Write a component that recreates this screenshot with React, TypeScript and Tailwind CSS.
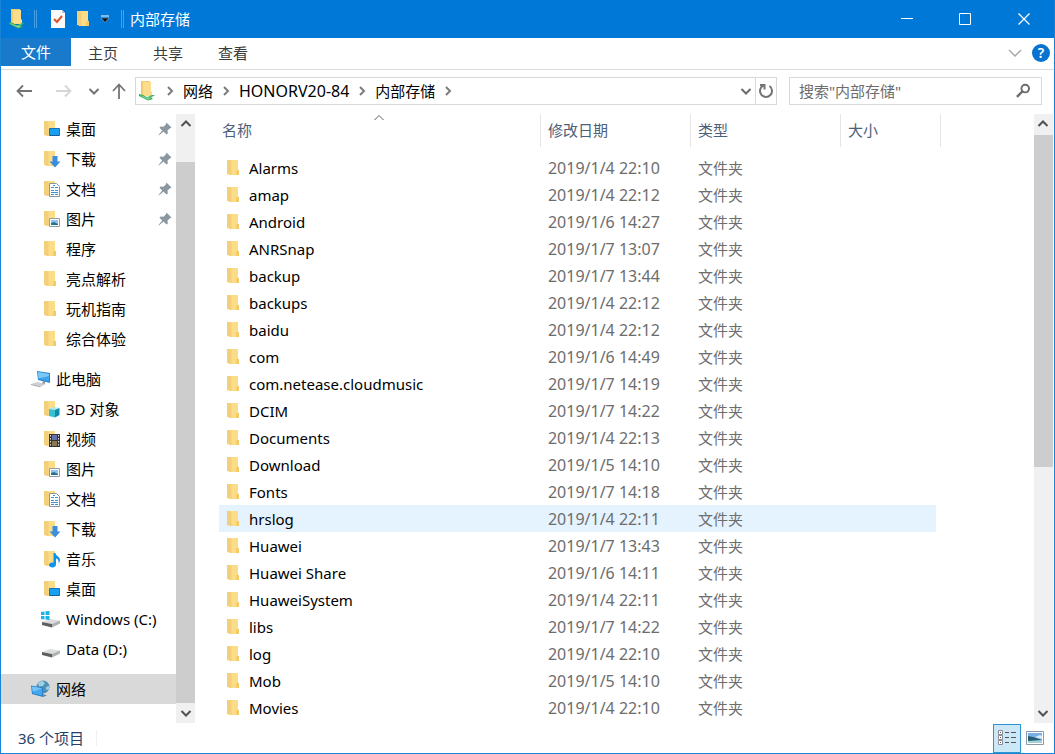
import type { ReactNode } from "react";

const FILES: [string, string][] = [
  ["Alarms", "2019/1/4 22:10"],
  ["amap", "2019/1/4 22:12"],
  ["Android", "2019/1/6 14:27"],
  ["ANRSnap", "2019/1/7 13:07"],
  ["backup", "2019/1/7 13:44"],
  ["backups", "2019/1/4 22:12"],
  ["baidu", "2019/1/4 22:12"],
  ["com", "2019/1/6 14:49"],
  ["com.netease.cloudmusic", "2019/1/7 14:19"],
  ["DCIM", "2019/1/7 14:22"],
  ["Documents", "2019/1/4 22:13"],
  ["Download", "2019/1/5 14:10"],
  ["Fonts", "2019/1/7 14:18"],
  ["hrslog", "2019/1/4 22:11"],
  ["Huawei", "2019/1/7 13:43"],
  ["Huawei Share", "2019/1/6 14:11"],
  ["HuaweiSystem", "2019/1/4 22:11"],
  ["libs", "2019/1/7 14:22"],
  ["log", "2019/1/4 22:10"],
  ["Mob", "2019/1/5 14:10"],
  ["Movies", "2019/1/4 22:10"],
];

function FolderIcon({ children }: { children?: ReactNode }) {
  return (
    <svg width="18" height="18" viewBox="0 0 18 18" className="shrink-0" aria-hidden="true">
      <path d="M3 1h9v9.500l1 1V16H3z" fill="#fbdd88" />
      <path d="M1 1h3l1.500 1.500V16L1 15z" fill="#f3cf7c" />
      <path d="M10.500 11h2.500v5h-3z" fill="#f3cb66" />
      {children}
    </svg>
  );
}

const DesktopIcon = () => (
  <FolderIcon>
    <path d="M6.500 8.500h10v7h-10z" fill="#18a0f2" stroke="#1673b9" />
    <path d="M7 15.500h10" stroke="#0b4f8c" strokeDasharray="1 1" />
  </FolderIcon>
);
const DownloadIcon = () => (
  <FolderIcon>
    <path d="M9.500 6h5v5.500h3L12 17.500 6.500 11.500h3z" fill="#3b8ede" />
  </FolderIcon>
);
const DocIcon = () => (
  <FolderIcon>
    <path d="M6.500 3.500h7l3 3v10h-10z" fill="#fff" stroke="#8795a1" />
    <path d="M8 7.500h3M12 7.500h3M8 10.500h3M12 10.500h3M8 12.500h7M8 14.500h3M12 14.500h3M10 5.500h2" stroke="#3c8fd0" />
  </FolderIcon>
);
const PictureIcon = () => (
  <FolderIcon>
    <path d="M6.500 8.500h10v8h-10z" fill="#fff" stroke="#8e9aa5" />
    <path d="M8 10h7v5H8z" fill="#8cc4ee" />
    <path d="M8 13l3-1 4 2v1H8z" fill="#2d6f8f" />
  </FolderIcon>
);
const CubeIcon = () => (
  <FolderIcon>
    <path d="M6 9l5-2 5.500 1-4.500 2z" fill="#a6ebf3" />
    <path d="M6 9l6 1v7.500L6 16z" fill="#35c0d4" />
    <path d="M12 10l4.500-2v7L12 17.500z" fill="#108ba8" />
  </FolderIcon>
);
const VideoIcon = () => (
  <FolderIcon>
    <path d="M6 4h11v13H6z" fill="#373535" />
    <path d="M9 5h5v5H9z" fill="#6670aa" />
    <path d="M9 11h5v5H9z" fill="#8a7650" />
    <path d="M7.500 5v12M15.500 5v12" stroke="#ddd" strokeDasharray="1.500 1.500" />
  </FolderIcon>
);
const MusicIcon = () => (
  <FolderIcon>
    <path d="M10.500 3h2c0 3 4.500 3.500 4.500 7 0 1.500-.7 2.500-1.500 3 .5-2.500-.7-4-2.500-4.500V14c0 2-1.500 3.500-3.500 3.500S6 16.500 6 15s2-2.900 4.500-2.400z" fill="#1194e8" />
  </FolderIcon>
);
function PcIcon() {
  return (
    <svg width="20" height="18" viewBox="0 0 20 18" className="shrink-0" aria-hidden="true">
      <path d="M6 1l13 2v10L7 10z" fill="#2485d2" />
      <path d="M7 2l11 2v7.500L8 9z" fill="#3ea5ec" />
      <path d="M7 2l11 2v2L7.500 8.500z" fill="#7cc8f6" />
      <path d="M12 11l2 .5V14h-3z" fill="#8c9296" />
      <path d="M0 14l6-2 9 2-5 2.500z" fill="#cdd0d2" />
      <path d="M0 14l10 2.500-1 .8-9-2.300z" fill="#a1a6aa" />
    </svg>
  );
}
function DriveIcon({ system = false }: { system?: boolean }) {
  return (
    <svg width="20" height="18" viewBox="0 0 20 18" className="shrink-0" aria-hidden="true">
      <path d="M1 12l8-3 10 1.500-8 3.500z" fill="#dcdddd" />
      <path d="M1 12l10 2v3.500L1 15z" fill="#5c6062" />
      <path d="M11 14l8-3.500v3l-8 4z" fill="#aeb1b3" />
      {system && <path d="M0 2l3.500-.5V5H0zM4.500 1.300L8.500 1v4h-4zM0 6h3.500v3.500L0 9zM4.500 6h4v4l-4-.4z" fill="#18b3ea" />}
    </svg>
  );
}
function NetworkIcon() {
  return (
    <svg width="20" height="18" viewBox="0 0 20 18" className="shrink-0" aria-hidden="true">
      <circle cx="12" cy="7" r="6.500" fill="#4f8fb4" />
      <path d="M7 3l4-2.500L14 3l-2 3-4 .5zM15 7l3-1v3l-3 1z" fill="#9fcfe2" />
      <path d="M0 5.500l12 2V17L1 14z" fill="#2381c9" />
      <path d="M1 6.500l10 1.800v7.200L2 13.200z" fill="#45a6ee" />
      <path d="M1 6.500l10 1.800-9.300 3.500z" fill="#76c3f7" />
      <path d="M12 14l4 1.500-4 1.500z" fill="#728791" />
    </svg>
  );
}
function DeviceIcon() {
  return (
    <svg width="18" height="20" viewBox="0 0 18 20" className="shrink-0" aria-hidden="true">
      <path d="M2 0h9v14H2z" fill="#f1ca6d" />
      <path d="M4 1h8v9l1 1v4H4z" fill="#fbdd8b" />
      <path d="M0 13l4 1 4 2.200 5-2.200h3l-4 2.500 2 1.500-5 1.500-9-4.500z" fill="#35a657" />
      <path d="M1 13.800l7 3 6-2.500-4 2.700 2 1-3 .8-7-3.500z" fill="#7bd894" />
    </svg>
  );
}
function PinIcon() {
  return (
    <svg width="14" height="14" viewBox="0 0 14 14" className="shrink-0" aria-hidden="true">
      <path d="M8.500.5l5 5-1.500.7-2.500 2.300.3 3-1.300 1-3-3L.8 13.500.5 13l3.700-4.500L1.500 5.800l1-1.300 3 .3L8 2.300z" fill="#8a97a0" />
    </svg>
  );
}

type Direction = "up" | "down" | "right";
const CHEVRONS: Record<Direction, string> = {
  up: "M1.500 8L6 3.500 10.500 8",
  down: "M1.500 4L6 8.500 10.500 4",
  right: "M4 2L8 6 4 10",
};
function Chevron({ dir, thin = false }: { dir: Direction; thin?: boolean }) {
  return (
    <svg width="12" height="12" viewBox="0 0 12 12" className="shrink-0" fill="none" stroke="currentColor" strokeWidth={thin ? 1 : 2} aria-hidden="true">
      <path d={CHEVRONS[dir]} />
    </svg>
  );
}

function NavItem({ icon, label, pinned, root, active }: { icon: ReactNode; label: string; pinned?: boolean; root?: boolean; active?: boolean }) {
  return (
    <li>
      <a
        href="#"
        className={`flex h-[30px] items-center gap-[5px] pr-1 ${root ? "pl-[30px]" : "pl-10"} ${active ? "bg-[#d9d9d9]" : ""}`}
      >
        <span className="flex w-5 justify-end">{icon}</span>
        <span className="grow whitespace-nowrap">{label}</span>
        {pinned && <PinIcon />}
      </a>
    </li>
  );
}

function ScrollBar({ name, lead, thumb }: { name: string; lead: string; thumb: string }) {
  return (
    <div className="flex w-[19px] shrink-0 flex-col bg-[#f0f0f0] text-[#505050]">
      <button aria-label={`${name}向上滚动`} className="flex h-5 items-center justify-center"><Chevron dir="up" /></button>
      <div className={lead} />
      <div className={`bg-[#cdcdcd] ${thumb}`} />
      <button aria-label={`${name}向下滚动`} className="mt-auto flex h-5 items-center justify-center"><Chevron dir="down" /></button>
    </div>
  );
}

function TitleBar() {
  return (
    <header className="flex h-[38px] items-center bg-[#0078d7] pl-2 text-white">
      <DeviceIcon />
      <span className="ml-[7px] h-[18px] w-[3px] border-x border-[#4a9fe2]" />
      <button aria-label="属性" className="ml-[14px]">
        <svg width="14" height="18" viewBox="0 0 14 18">
          <path d="M0 0h11l3 3v15H0z" fill="#f9f9f9" />
          <path d="M11 0v3h3z" fill="#b9c4cc" />
          <path d="M3 9l3 3 5-6" fill="none" stroke="#d9532c" strokeWidth="2" />
        </svg>
      </button>
      <button aria-label="新建文件夹" className="ml-[11px]"><FolderIcon /></button>
      <button aria-label="自定义快速访问工具栏" className="ml-[6px]">
        <svg width="10" height="10" viewBox="0 0 10 10">
          <path d="M1 2h8" stroke="#fff" /><path d="M1 4h8L5 8.500z" fill="#111" stroke="#9bc8eb" strokeWidth=".5" />
        </svg>
      </button>
      <span className="ml-[11px] h-[18px] w-[3px] border-x border-[#4a9fe2]" />
      <h1 className="ml-[6px] grow">内部存储</h1>
      <div className="flex self-stretch">
        <button aria-label="最小化" className="flex w-[58px] items-center justify-center"><svg width="12" height="12" stroke="#fff"><path d="M0 5.500h12" /></svg></button>
        <button aria-label="最大化" className="flex w-[58px] items-center justify-center"><svg width="12" height="12" fill="none" stroke="#fff"><path d="M.5.5h11v11H.5z" /></svg></button>
        <button aria-label="关闭" className="flex w-[60px] items-center justify-center"><svg width="12" height="12" stroke="#fff" strokeWidth="1.300"><path d="M.5.5l11 11M11.500.5l-11 11" /></svg></button>
      </div>
    </header>
  );
}

function Crumb({ children, latin = false }: { children: string; latin?: boolean }) {
  return (
    <>
      <a href="#" className={`whitespace-nowrap ${latin ? "text-base leading-5" : ""}`}>{children}</a>
      <span className="mx-[7px] text-[#7c7c7c]"><Chevron dir="right" /></span>
    </>
  );
}

export default function App() {
  return (
    <div className="flex min-h-screen flex-col border border-t-0 border-[#1883d7] bg-white font-['Noto_Sans','Noto_Sans_CJK_SC',sans-serif] text-[15px] leading-5 text-black">
      <TitleBar />
      <nav className="flex h-8 items-start border-b border-[#dadbdc] text-[#3b3b3b]">
        <button className="h-7 w-[70px] bg-[#1979ca] text-white">文件</button>
        <button className="ml-[17px] h-[30px]">主页</button>
        <button className="ml-[35px] h-[30px]">共享</button>
        <button className="ml-[35px] h-[30px]">查看</button>
        <button aria-label="展开功能区" className="mt-[9px] ml-auto text-[#a5a5a5]">
          <svg width="14" height="12" viewBox="0 0 14 12" fill="none" stroke="currentColor" strokeWidth="1.300"><path d="M1 3l6 6 6-6" /></svg>
        </button>
        <button aria-label="帮助" className="mt-[6px] mr-1 ml-[10px] size-[18px] rounded-full bg-[#0873ce] text-[14px] leading-[18px] font-semibold text-white">?</button>
      </nav>

      <div className="flex h-11 items-start pt-[7px] pr-3 pl-[15px]">
        <div className="flex h-7 w-[119px] shrink-0 items-center text-[#747474]">
          <button aria-label="后退"><svg width="16" height="14" viewBox="0 0 16 14" fill="none" stroke="currentColor" strokeWidth="1.800"><path d="M16 7H2M7 1.500L1.500 7 7 12.500" /></svg></button>
          <button aria-label="前进" className="ml-6 text-[#d5d5d5]"><svg width="16" height="14" viewBox="0 0 16 14" fill="none" stroke="currentColor" strokeWidth="1.800"><path d="M0 7h14M9 1.500L14.500 7 9 12.500" /></svg></button>
          <button aria-label="最近位置" className="ml-4"><Chevron dir="down" /></button>
          <button aria-label="向上" className="ml-3"><svg width="14" height="16" viewBox="0 0 14 16" fill="none" stroke="currentColor" strokeWidth="1.800"><path d="M7 16V2M1 8l6-6.500L13 8" /></svg></button>
        </div>
        <div className="flex h-7 grow items-center border border-[#d9d9d9] pl-[3px]">
          <DeviceIcon />
          <span className="mx-[7px] text-[#7c7c7c]"><Chevron dir="right" /></span>
          <Crumb>网络</Crumb>
          <Crumb latin>HONORV20-84</Crumb>
          <Crumb>内部存储</Crumb>
          <button aria-label="以前的位置" className="mr-[3px] ml-auto text-[#6b6b6b]"><Chevron dir="down" /></button>
          <button aria-label="刷新" className="flex w-[21px] items-center justify-center self-stretch border-l border-[#d9d9d9] text-[#747474]">
            <svg width="16" height="16" viewBox="0 0 16 16" fill="none" stroke="currentColor" strokeWidth="2"><path d="M11.500 3a6 6 0 1 1-6.500-.3M2 2h4.500v4.500" /></svg>
          </button>
        </div>
        <label className="ml-3 flex h-7 w-[253px] shrink-0 items-center border border-[#d9d9d9] pr-[10px] pl-[9px]">
          <input aria-label="搜索" placeholder={'搜索"内部存储"'} className="min-w-0 grow outline-none placeholder:text-[#6d6d6d]" />
          <svg width="16" height="16" viewBox="0 0 16 16" fill="none" stroke="#6b6b6b" strokeWidth="2" aria-hidden="true"><circle cx="10.500" cy="5.500" r="3.900" /><path d="M7.500 8.500L2 14" strokeWidth="2.500" /></svg>
        </label>
      </div>

      <main className="flex grow">
        <aside className="flex w-[194px] shrink-0">
          <ul className="min-w-0 grow pb-[19px]">
            <NavItem icon={<DesktopIcon />} label="桌面" pinned />
            <NavItem icon={<DownloadIcon />} label="下载" pinned />
            <NavItem icon={<DocIcon />} label="文档" pinned />
            <NavItem icon={<PictureIcon />} label="图片" pinned />
            <NavItem icon={<FolderIcon />} label="程序" />
            <NavItem icon={<FolderIcon />} label="亮点解析" />
            <NavItem icon={<FolderIcon />} label="玩机指南" />
            <NavItem icon={<FolderIcon />} label="综合体验" />
            <li className="h-[10px]" aria-hidden="true" />
            <NavItem icon={<PcIcon />} label="此电脑" root />
            <NavItem icon={<CubeIcon />} label="3D 对象" />
            <NavItem icon={<VideoIcon />} label="视频" />
            <NavItem icon={<PictureIcon />} label="图片" />
            <NavItem icon={<DocIcon />} label="文档" />
            <NavItem icon={<DownloadIcon />} label="下载" />
            <NavItem icon={<MusicIcon />} label="音乐" />
            <NavItem icon={<DesktopIcon />} label="桌面" />
            <NavItem icon={<DriveIcon system />} label="Windows (C:)" />
            <NavItem icon={<DriveIcon />} label="Data (D:)" />
            <li className="h-[10px]" aria-hidden="true" />
            <NavItem icon={<NetworkIcon />} label="网络" root active />
          </ul>
          <ScrollBar name="导航" lead="h-7" thumb="grow" />
        </aside>

        <section className="min-w-0 grow pr-[98px] pl-6">
          <table className="w-full table-fixed border-collapse text-left">
            <colgroup>
              <col />
              <col className="w-[150px]" />
              <col className="w-[150px]" />
              <col className="w-[96px]" />
            </colgroup>
            <thead className="text-[#4c607a]">
              <tr className="h-10 align-top">
                <th className="relative p-0 font-normal">
                  <div className="h-[33px] pl-[3px] leading-[33px]">名称</div>
                  <span className="absolute -top-[2px] left-1/2 -translate-x-1/2 text-[#606060]"><Chevron dir="up" thin /></span>
                </th>
                <th className="p-0 font-normal"><div className="h-[33px] border-l border-[#e5e5e5] pl-[7px] leading-[33px]">修改日期</div></th>
                <th className="p-0 font-normal"><div className="h-[33px] border-l border-[#e5e5e5] pl-[7px] leading-[33px]">类型</div></th>
                <th className="p-0 font-normal"><div className="-mr-[5px] h-[33px] border-x border-[#e5e5e5] pl-[7px] leading-[33px]">大小</div></th>
              </tr>
            </thead>
            <tbody>
              {FILES.map(([name, date]) => (
                <tr key={name} className={`h-[27px] ${name === "hrslog" ? "bg-[#e5f3ff]" : ""}`}>
                  <td className="p-0">
                    <a href="#" className="flex items-center gap-[5px] pl-[7px]"><FolderIcon />{name}</a>
                  </td>
                  <td className="p-0 pl-2 text-base leading-5 whitespace-nowrap text-[#6d6d6d]">{date}</td>
                  <td className="p-0 pl-2 whitespace-nowrap text-[#6d6d6d]">文件夹</td>
                  <td className="p-0" />
                </tr>
              ))}
            </tbody>
          </table>
        </section>
        <div className="mr-px flex">
          <ScrollBar name="文件列表" lead="h-px" thumb="h-[332px]" />
        </div>
      </main>

      <footer className="flex h-[30px] items-center pl-[17px] text-[#26406b]">
        <span>36 个项目</span>
        <span className="ml-3 h-4 w-px bg-[#f0f0f0]" />
        <button aria-label="详细信息" className="ml-auto flex h-[29px] w-7 items-center justify-center border border-[#2a96d4] bg-[#cce8f7]">
          <svg width="18" height="16" viewBox="0 0 18 16" fill="none">
            <path d="M.5.5h4v4h-4zM.5 5.500h4v4h-4zM.5 10.500h4v4h-4z" fill="#fff" stroke="#8c8c93" />
            <path d="M2 2.500h1M2 7.500h1M2 12.500h1M7 2.500h4M13 2.500h5M7 7.500h4M13 7.500h5M7 12.500h4M13 12.500h5" stroke="#555" />
          </svg>
        </button>
        <button aria-label="大缩略图" className="mr-[10px] ml-[5px]">
          <svg width="18" height="14" viewBox="0 0 18 14">
            <path d="M.5.5h17v13H.5z" fill="#fff" stroke="#8c98a5" />
            <path d="M2 2h14v10H2z" fill="#79afe8" />
            <path d="M2 5l5 1 9 3v3H2z" fill="#285d71" /><path d="M2 10l14-1v3H2z" fill="#a3d0db" /><path d="M9 6l5-2 2 1v3z" fill="#dcecf7" />
          </svg>
        </button>
      </footer>
    </div>
  );
}
